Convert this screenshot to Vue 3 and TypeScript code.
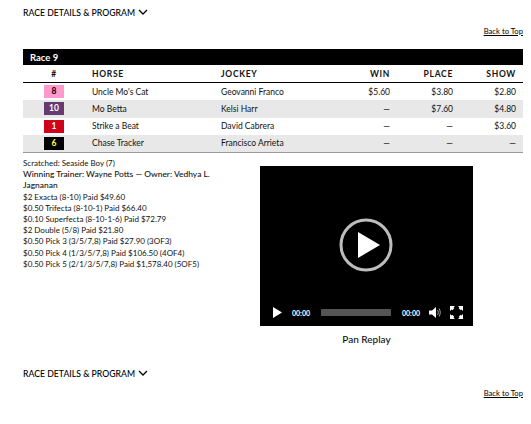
<script setup lang="ts">
interface Runner {
  num: number;
  bg: string;
  fg: string;
  horse: string;
  jockey: string;
  win: string;
  place: string;
  show: string;
}

const runners: Runner[] = [
  { num: 8, bg: '#ff99cc', fg: '#000', horse: "Uncle Mo's Cat", jockey: 'Geovanni Franco', win: '$5.60', place: '$3.80', show: '$2.80' },
  { num: 10, bg: '#663b73', fg: '#fff', horse: 'Mo Betta', jockey: 'Kelsi Harr', win: '—', place: '$7.60', show: '$4.80' },
  { num: 1, bg: '#d0021b', fg: '#fff', horse: 'Strike a Beat', jockey: 'David Cabrera', win: '—', place: '—', show: '$3.60' },
  { num: 6, bg: '#000', fg: '#ffff33', horse: 'Chase Tracker', jockey: 'Francisco Arrieta', win: '—', place: '—', show: '—' },
];

const payouts = [
  '$2 Exacta (8-10) Paid $49.60',
  '$0.50 Trifecta (8-10-1) Paid $66.40',
  '$0.10 Superfecta (8-10-1-6) Paid $72.79',
  '$2 Double (5/8) Paid $21.80',
  '$0.50 Pick 3 (3/5/7,8) Paid $27.90 (3OF3)',
  '$0.50 Pick 4 (1/3/5/7,8) Paid $106.50 (4OF4)',
  '$0.50 Pick 5 (2/1/3/5/7,8) Paid $1,578.40 (5OF5)',
];
</script>

<template>
  <div class="page">
    <div class="section-title">
      <span>RACE DETAILS &amp; PROGRAM</span>
      <svg width="10" height="6" viewBox="0 0 10 6"><path d="M1 1l4 4 4-4" fill="none" stroke="#000" stroke-width="1.3" /></svg>
    </div>
    <div class="back-row"><a href="#">Back to Top</a></div>

    <div class="race-bar">Race 9</div>
    <table class="results">
      <colgroup>
        <col style="width: 62px" />
        <col style="width: 129px" />
        <col style="width: 113px" />
        <col style="width: 70px" />
        <col style="width: 63px" />
        <col style="width: 63px" />
      </colgroup>
      <thead>
        <tr>
          <th class="center">#</th>
          <th>HORSE</th>
          <th>JOCKEY</th>
          <th class="right">WIN</th>
          <th class="right">PLACE</th>
          <th class="right">SHOW</th>
        </tr>
      </thead>
      <tbody>
        <tr v-for="r in runners" :key="r.num">
          <td class="center">
            <span class="badge" :style="{ background: r.bg, color: r.fg }">{{ r.num }}</span>
          </td>
          <td>{{ r.horse }}</td>
          <td>{{ r.jockey }}</td>
          <td class="right">{{ r.win }}</td>
          <td class="right">{{ r.place }}</td>
          <td class="right">{{ r.show }}</td>
        </tr>
      </tbody>
    </table>

    <div class="details">
      <div class="notes">
        <div>Scratched: Seaside Boy (7)</div>
        <div class="trainer">Winning Trainer: Wayne Potts — Owner: Vedhya L. Jagnanan</div>
        <div v-for="p in payouts" :key="p">{{ p }}</div>
      </div>
      <div class="replay">
        <div class="video">
          <svg class="big-play" width="56" height="56" viewBox="0 0 56 56">
            <circle cx="28" cy="28" r="25" fill="none" stroke="#bdbdbd" stroke-width="3" />
            <path d="M20 15v26l22-13z" fill="#fff" />
          </svg>
          <div class="controls">
            <svg class="ctl-play" width="9" height="11" viewBox="0 0 9 11"><path d="M0 0v11l9-5.500z" fill="#fff" /></svg>
            <span class="time">00:00</span>
            <div class="track"></div>
            <span class="time">00:00</span>
            <svg class="ctl-vol" width="12" height="11" viewBox="0 0 12 11">
              <path d="M0 3.500h3l4-3.500v11l-4-3.500h-3z" fill="#fff" />
              <path d="M8.500 3c1 1.500 1 3.500 0 5M10 1.500c1.700 2.500 1.700 5.500 0 8" fill="none" stroke="#ccc" stroke-width="0.8" />
            </svg>
            <svg class="ctl-full" width="13" height="13" viewBox="0 0 13 13">
              <path d="M0 0h5l-1.500 1.500 0.800 0.800-2 2-0.800-0.800-1.500 1.500zM13 0v5l-1.500-1.500-0.800 0.800-2-2 0.800-0.800-1.500-1.500zM0 13v-5l1.500 1.500 0.800-0.800 2 2-0.800 0.800 1.500 1.500zM13 13h-5l1.500-1.500-0.800-0.800 2-2 0.800 0.800 1.500-1.500z" fill="#fff" />
            </svg>
          </div>
        </div>
        <div class="caption">Pan Replay</div>
      </div>
    </div>

    <div class="section-title second">
      <span>RACE DETAILS &amp; PROGRAM</span>
      <svg width="10" height="6" viewBox="0 0 10 6"><path d="M1 1l4 4 4-4" fill="none" stroke="#000" stroke-width="1.3" /></svg>
    </div>
    <div class="back-row second-back"><a href="#">Back to Top</a></div>
  </div>
</template>

<style scoped>
.page {
  width: 500px;
  height: 424px;
  padding-left: 23px;
  font-family: Lato, "Open Sans", sans-serif;
  font-size: 8.500px;
  color: #111;
  overflow: hidden;
}

.section-title {
  display: flex;
  align-items: center;
  gap: 3px;
  height: 12px;
  margin-top: 6px;
  font-size: 8.700px;
  font-weight: 500;
  color: #000;
}

.back-row {
  display: flex;
  justify-content: flex-end;
  height: 12px;
  margin-top: 7px;
  font-size: 7.700px;
}

.back-row a {
  color: #000;
  align-self: center;
  line-height: 9px;
}

.race-bar {
  height: 16px;
  margin-top: 12px;
  padding-left: 7px;
  background: #000;
  color: #fff;
  font-size: 9.500px;
  font-weight: 700;
  line-height: 17px;
}

.results {
  width: 500px;
  border-collapse: collapse;
  table-layout: fixed;
  border-bottom: 1px solid #999;
}

.results th {
  height: 17px;
  padding: 0 7px;
  border-bottom: 1px solid #000;
  font-size: 8.500px;
  font-weight: 700;
  letter-spacing: 0.7px;
  text-align: left;
  color: #111;
}

.results td {
  height: 17.250px;
  padding: 0 7px;
  font-size: 8.500px;
  white-space: nowrap;
}

.results tbody tr:nth-child(even) {
  background: #e8e8e8;
}

.results .center {
  text-align: center;
}

.results .right {
  text-align: right;
}

.badge {
  display: block;
  width: 20px;
  height: 13px;
  margin: 0 auto;
  font-weight: 700;
  line-height: 13px;
}

.details {
  display: flex;
  margin-top: 2px;
}

.notes {
  width: 200px;
  margin-top: 1px;
  padding-top: 2px;
  font-size: 8px;
  line-height: 11.200px;
  flex-shrink: 0;
}

.trainer {
  font-size: 8.450px;
  font-weight: 500;
}

.replay {
  margin-left: 37px;
  margin-top: 11px;
  width: 213px;
}

.video {
  position: relative;
  display: flex;
  align-items: flex-end;
  height: 160px;
  background: #000;
}

.big-play {
  position: absolute;
  left: 78px;
  top: 51px;
}

.controls {
  display: flex;
  align-items: center;
  width: 100%;
  height: 13px;
  margin-bottom: 7px;
  padding-left: 13px;
}

.time {
  width: 20px;
  color: #fff;
  font-size: 7px;
  font-weight: 700;
  text-align: center;
}

.ctl-play {
  margin-right: 9px;
}

.track {
  width: 70px;
  height: 7px;
  margin: 0 10px 0 10px;
  background: #555;
  border-radius: 1px;
}

.ctl-vol {
  margin-left: 8px;
}

.ctl-full {
  margin-left: 9px;
}

.caption {
  margin-top: 7px;
  text-align: center;
  font-size: 10px;
  font-weight: 500;
  line-height: 12px;
}

.second {
  margin-top: 22px;
}

.second-back {
  margin-top: 8px;
}
</style>
